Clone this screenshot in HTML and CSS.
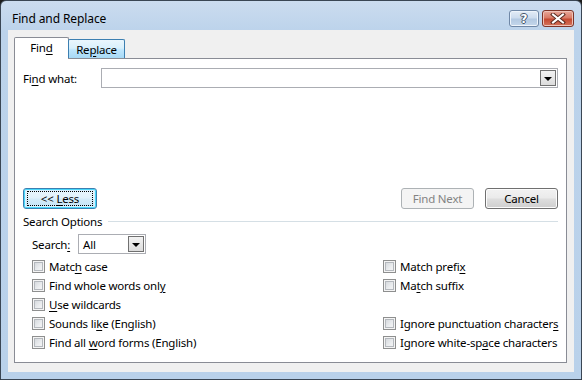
FILE: index.html
```html
<!DOCTYPE html>
<html lang="en">
<head>
    <meta charset="UTF-8">
    <title>Find and Replace</title>
    <link rel="stylesheet" href="styles.css">
</head>
<body>
    <div class="window">
        <div class="title-bar">
            <span class="title">Find and Replace</span>
            <div class="caption-buttons">
                <div class="cap-btn help-btn"><span>?</span></div>
                <div class="cap-btn close-btn">
                    <svg width="16" height="11" viewBox="0 0 16 11">
                        <path d="M3 1.5 L13 9.5 M13 1.5 L3 9.5" stroke="#5a2a20" stroke-width="4" stroke-linecap="square"/>
                        <path d="M3 1.5 L13 9.5 M13 1.5 L3 9.5" stroke="#fff" stroke-width="2" stroke-linecap="square"/>
                    </svg>
                </div>
            </div>
        </div>

        <div class="client">
            <div class="tabs">
                <div class="tab active"><span>Fin<u>d</u></span></div>
                <div class="tab hover"><span>Re<u>p</u>lace</span></div>
            </div>

            <div class="tab-panel">
                <div class="find-row">
                    <label class="find-label">Fi<u>n</u>d what:</label>
                    <div class="combo">
                        <div class="combo-text"></div>
                        <div class="drop-btn"><span class="arrow"></span></div>
                    </div>
                </div>

                <div class="button-row">
                    <button class="push-btn default-btn"><span class="focus-rect"><span>&lt;&lt; <u>L</u>ess</span></span></button>
                    <div class="right-buttons">
                        <button class="push-btn" disabled>Find Next</button>
                        <button class="push-btn">Cancel</button>
                    </div>
                </div>

                <div class="group-title">
                    <span>Search Options</span>
                    <div class="group-line"></div>
                </div>

                <div class="search-row">
                    <label class="search-label">Search<u>:</u></label>
                    <div class="combo small-combo">
                        <div class="combo-text">All</div>
                        <div class="drop-btn"><span class="arrow"></span></div>
                    </div>
                </div>

                <div class="options">
                    <div class="opt"><span class="check"></span><span>Matc<u>h</u> case</span></div>
                    <div class="opt"><span class="check"></span><span>Match prefi<u>x</u></span></div>
                    <div class="opt"><span class="check"></span><span>Find whole words onl<u>y</u></span></div>
                    <div class="opt"><span class="check"></span><span>Ma<u>t</u>ch suffix</span></div>
                    <div class="opt"><span class="check"></span><span><u>U</u>se wildcards</span></div>
                    <div class="opt"></div>
                    <div class="opt"><span class="check"></span><span>Sounds li<u>k</u>e (English)</span></div>
                    <div class="opt"><span class="check"></span><span>Ignore punctuation character<u>s</u></span></div>
                    <div class="opt"><span class="check"></span><span>Find all <u>w</u>ord forms (English)</span></div>
                    <div class="opt"><span class="check"></span><span>Ignore white-sp<u>a</u>ce characters</span></div>
                </div>
            </div>
        </div>
    </div>
</body>
</html>
```

FILE: styles.css
```css
body {
    margin: 0;
    width: 582px;
    height: 380px;
    background: #1c1c1c;
    font-family: 'Noto Sans', 'Open Sans', sans-serif;
    font-size: 11.5px;
    letter-spacing: -0.2px;
    color: #000;
}

u {
    text-underline-offset: 2px;
}

/* Window frame */
.window {
    box-sizing: border-box;
    width: 582px;
    height: 380px;
    border: 1px solid #3a4654;
    border-radius: 6px 6px 0 0;
    background: linear-gradient(#cbdcef 0, #bcd3eb 30px, #b9d1ea 100%);
    display: flex;
    flex-direction: column;
}

.title-bar {
    height: 29px;
    display: flex;
    align-items: center;
    justify-content: space-between;
    padding: 0 7px 0 11px;
}

.title {
    font-size: 12px;
    letter-spacing: -0.1px;
    padding-top: 5px;
}

.caption-buttons {
    display: flex;
    gap: 3px;
    padding-top: 6px;
}

.cap-btn {
    box-sizing: border-box;
    height: 17px;
    border-radius: 3px;
    display: flex;
    align-items: center;
    justify-content: center;
}

.help-btn {
    width: 30px;
    border: 1px solid #6f87a6;
    background: linear-gradient(#e3ecf6 0%, #cddcee 45%, #b3c9e2 55%, #c5d7eb 100%);
    box-shadow: inset 0 0 0 1px #eef4fb;
}

.help-btn span {
    font-family: 'DejaVu Sans', sans-serif;
    font-weight: bold;
    font-size: 12px;
    color: #fff;
    text-shadow: -1px 0 #44546a, 1px 0 #44546a, 0 -1px #44546a, 0 1px #44546a;
    line-height: 1;
}

.close-btn {
    width: 32px;
    border: 1px solid #7e3428;
    background: linear-gradient(#e9a99b 0%, #d97a66 45%, #c54a32 55%, #d4745c 100%);
    box-shadow: inset 0 0 0 1px #efc2b7;
}

/* Client area */
.client {
    flex: 1;
    margin: 0 7px 7px 7px;
    background: #f0f0f0;
    padding: 7px 7px 9px 6px;
    display: flex;
    flex-direction: column;
}

.tabs {
    display: flex;
    height: 21px;
    align-items: flex-end;
    position: relative;
    z-index: 1;
}

.tab {
    box-sizing: border-box;
    height: 19px;
    padding: 0 10px;
    display: flex;
    align-items: center;
    border: 1px solid #898c95;
    border-bottom: none;
    border-radius: 2px 2px 0 0;
}

.tab.active {
    height: 22px;
    width: 55px;
    background: #fff;
    justify-content: center;
    margin-bottom: -1px;
    padding-bottom: 2px;
}

.tab.hover {
    width: 57px;
    margin-left: -1px;
    background: linear-gradient(#eaf6fd 0%, #d9f0fc 45%, #bee6fd 55%, #a7d9f5 100%);
    border-color: #3c7fb1;
    justify-content: center;
    padding: 0;
}

.tab-panel {
    flex: 1;
    background: #fff;
    border: 1px solid #898c95;
    padding: 9px 8px 0 8px;
}

/* Find row */
.find-row {
    display: flex;
    align-items: center;
}

.find-label {
    width: 78px;
}

.combo {
    flex: 1;
    box-sizing: border-box;
    height: 20px;
    border: 1px solid #abadb3;
    display: flex;
    align-items: stretch;
    padding: 1px;
    background: #fff;
}

.combo-text {
    flex: 1;
    display: flex;
    align-items: center;
    padding-left: 3px;
}

.drop-btn {
    box-sizing: border-box;
    width: 16px;
    border: 1px solid #707070;
    background: linear-gradient(#f2f2f2, #dcdcdc);
    display: flex;
    align-items: center;
    justify-content: center;
}

.arrow {
    width: 0;
    height: 0;
    border-left: 4px solid transparent;
    border-right: 4px solid transparent;
    border-top: 4px solid #000;
    margin-top: 1px;
}

/* Buttons */
.button-row {
    margin-top: 100px;
    display: flex;
    justify-content: space-between;
}

.right-buttons {
    display: flex;
    gap: 11px;
}

.push-btn {
    box-sizing: border-box;
    width: 73px;
    height: 21px;
    font-family: inherit;
    font-size: 11.5px;
    letter-spacing: -0.2px;
    color: #000;
    border: 1px solid #707070;
    border-radius: 3px;
    background: linear-gradient(#f2f2f2 0%, #ebebeb 45%, #dddddd 55%, #cfcfcf 100%);
    box-shadow: inset 0 0 0 1px #fcfcfc;
    padding: 0;
    display: flex;
    align-items: center;
    justify-content: center;
}

.push-btn:disabled {
    color: #838383;
    border-color: #adb2b5;
    background: #f4f4f4;
    box-shadow: none;
}

.default-btn {
    width: 74px;
    border-color: #3c7fb1;
    box-shadow: inset 0 0 0 1px #48d8fb, inset 0 0 0 2px #d6efff;
    background: linear-gradient(#eaf6fd 0%, #e2f2fb 45%, #d3ebf9 55%, #c5e4f7 100%);
}

.focus-rect {
    box-sizing: border-box;
    width: 66px;
    height: 15px;
    border: 1px dotted #000;
    display: flex;
    align-items: center;
    justify-content: center;
}

/* Search options group */
.group-title {
    display: flex;
    align-items: center;
    margin-top: 4px;
    height: 16px;
}

.group-line {
    flex: 1;
    margin-left: 6px;
    border-top: 1px solid #d5dfe5;
    margin-top: 1px;
}

.search-row {
    display: flex;
    align-items: center;
    padding-left: 9px;
    margin-top: 5px;
}

.search-label {
    width: 46px;
}

.small-combo {
    flex: none;
    width: 68px;
}

.options {
    display: grid;
    grid-template-columns: 351px 1fr;
    grid-auto-rows: 19px;
    padding-left: 9px;
    margin-top: 3px;
}

.opt {
    display: flex;
    align-items: center;
    white-space: nowrap;
}

.check {
    box-sizing: border-box;
    width: 13px;
    height: 13px;
    border: 1px solid #8e8f8f;
    background: linear-gradient(135deg, #cdd1d6 0%, #eceef0 60%, #f7f7f7 100%);
    box-shadow: inset 0 0 0 1px #f4f4f4, inset 0 0 0 2px #b4b8bd;
    margin-right: 4px;
}
```
